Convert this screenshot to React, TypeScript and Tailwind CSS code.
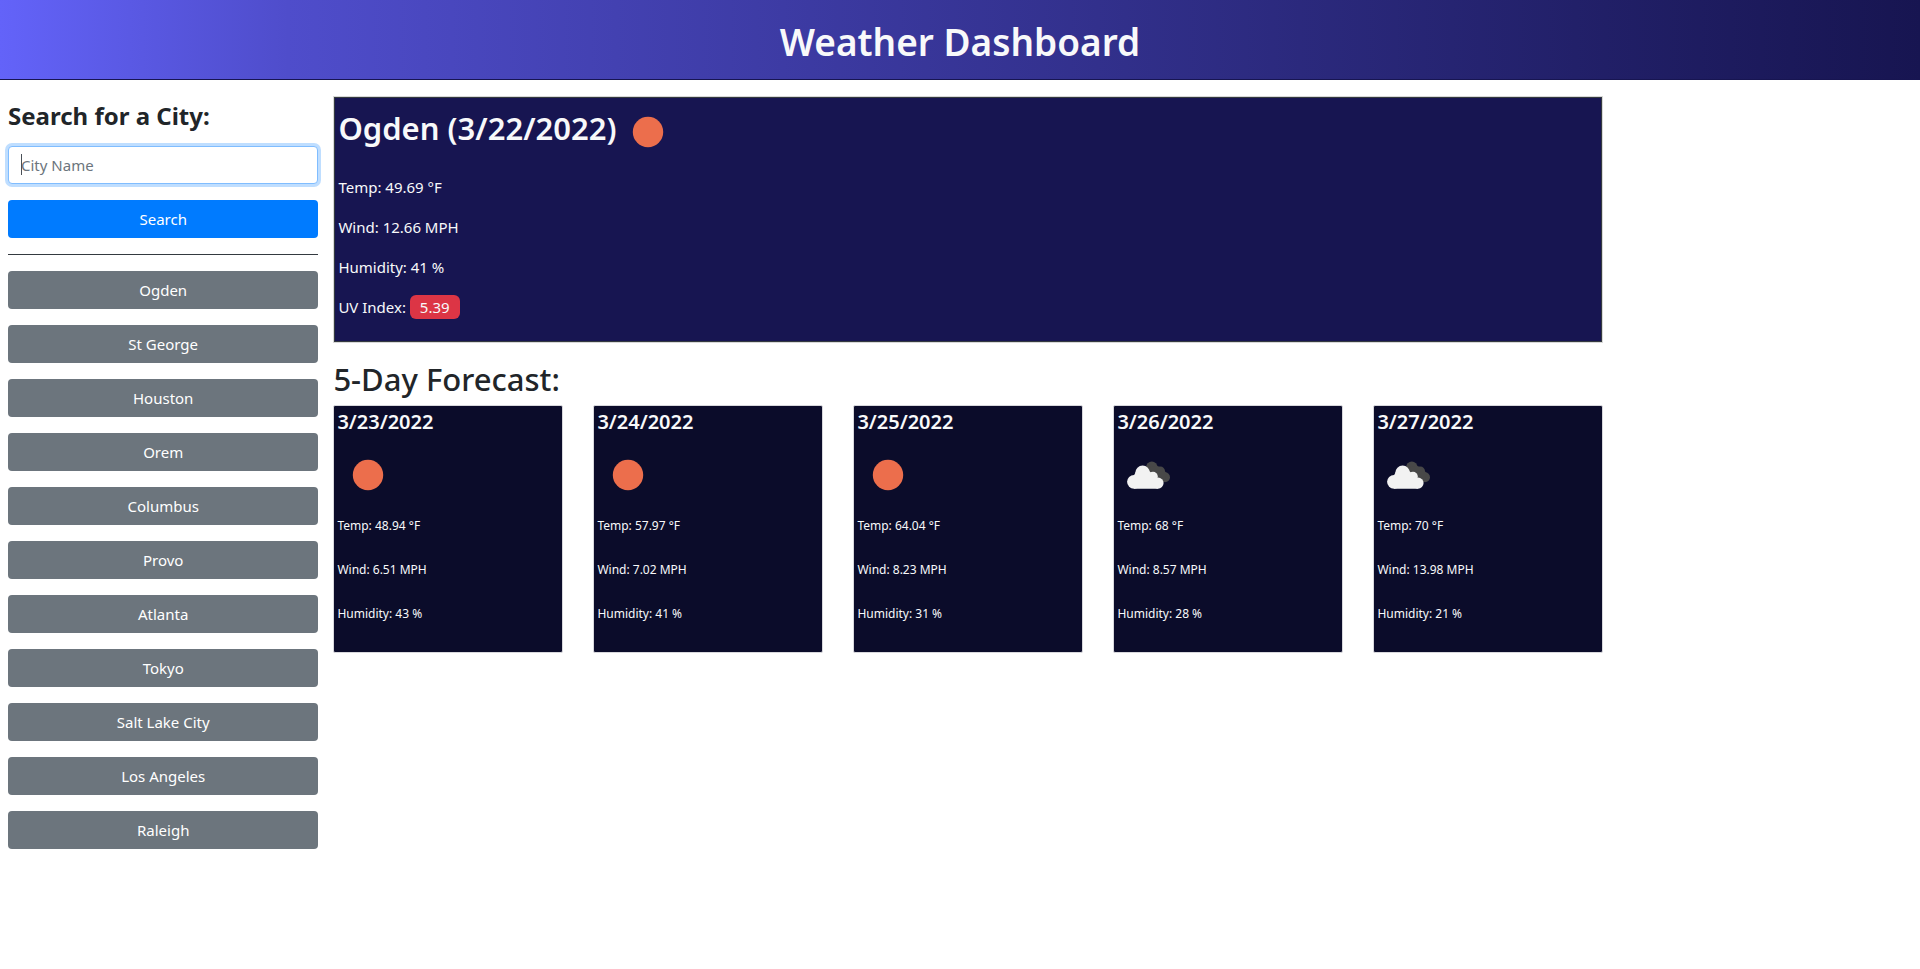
const cities = ["Ogden", "St George", "Houston", "Orem", "Columbus", "Provo", "Atlanta", "Tokyo", "Salt Lake City", "Los Angeles", "Raleigh"];

const forecast = [
  { date: "3/23/2022", icon: "sun", temp: "48.94", wind: "6.51", humidity: "43" },
  { date: "3/24/2022", icon: "sun", temp: "57.97", wind: "7.02", humidity: "41" },
  { date: "3/25/2022", icon: "sun", temp: "64.04", wind: "8.23", humidity: "31" },
  { date: "3/26/2022", icon: "clouds", temp: "68", wind: "8.57", humidity: "28" },
  { date: "3/27/2022", icon: "clouds", temp: "70", wind: "13.98", humidity: "21" },
];

function SunIcon() {
  return (
    <svg viewBox="0 0 50 50" className="size-[50px]" role="img" aria-label="Clear sky">
      <circle cx="25" cy="25" r="15.2" fill="#ec6e4c" />
    </svg>
  );
}

function CloudsIcon() {
  return (
    <svg viewBox="0 0 50 50" className="size-[50px]" role="img" aria-label="Broken clouds">
      <g fill="#484848">
        <circle cx="28.8" cy="17.4" r="5.8" />
        <circle cx="37.4" cy="21.2" r="4.6" />
        <circle cx="42" cy="27.2" r="5" />
        <path d="M24 18L33 15.5L37 17L41 20L44 24L41 32L30 28Z" />
      </g>
      <g fill="#f2f2f2">
        <circle cx="11" cy="31.8" r="6.9" />
        <circle cx="19.6" cy="22.8" r="7.3" />
        <circle cx="30" cy="26.6" r="4.8" />
        <circle cx="35" cy="33.1" r="5.6" />
        <path d="M11 25.2L12.8 22L26 21L34 27L35 38.7H11Z" />
      </g>
    </svg>
  );
}

export default function App() {
  return (
    <div className="min-h-screen bg-white font-['Noto_Sans','Open_Sans',sans-serif] text-[15px] leading-6 text-[#212529]">
      <header className="flex h-20 items-center justify-center border-b border-[#171551] bg-linear-to-r from-[#6363f9] via-[#4f4dcb] via-15% to-[#171551]">
        <h1 className="pt-1 text-[37px] leading-12 font-semibold text-[#f8f9fa]">Weather Dashboard</h1>
      </header>
      <div className="flex">
        <aside className="w-[17%] px-2 pt-4">
          <form onSubmit={(e) => e.preventDefault()}>
            <label htmlFor="city" className="mt-1 mb-3.5 block text-2xl leading-8 font-bold">Search for a City:</label>
            <div className="relative">
              <input
                id="city"
                type="text"
                placeholder="City Name"
                className="block h-[38px] w-full rounded border border-[#80bdff] bg-white px-3 shadow-[0_0_0_3px_#bfdeff] outline-none placeholder:text-[#6c757d]"
              />
              <span aria-hidden="true" className="pointer-events-none absolute top-2 left-[13px] h-[21px] w-px bg-[#495057]" />
            </div>
            <button type="submit" className="mt-4 h-[38px] w-full rounded bg-[#007bff] text-white">Search</button>
          </form>
          <hr className="my-4 border-[#343a40]" />
          <div className="flex flex-col gap-4">
            {cities.map((city) => (
              <button key={city} type="button" className="h-[38px] w-full rounded bg-[#6c757d] text-white">{city}</button>
            ))}
          </div>
        </aside>
        <main className="w-2/3 pt-4 pr-[3px] pl-[7px]">
          <section className="border border-[#d8d8d8]">
            <div className="border border-[#343a40] bg-[#171551] px-[3px] pt-1.5 pb-3.5 text-[#f8f9fa]">
              <h2 className="flex items-start gap-1.5 text-[31px] leading-12 font-semibold">
                Ogden (3/22/2022)
                <span className="pt-[3px]"><SunIcon /></span>
              </h2>
              <div className="mt-[18px] flex flex-col gap-4 pb-2">
                <p>Temp: 49.69 °F</p>
                <p>Wind: 12.66 MPH</p>
                <p>Humidity: 41 %</p>
                <p>UV Index: <span className="rounded-md bg-[#dc3545] px-2.5 py-0.5">5.39</span></p>
              </div>
            </div>
          </section>
          <h2 className="mt-[18px] mb-2 text-[31px] leading-9 font-medium">5-Day Forecast:</h2>
          <section className="grid grid-cols-5 gap-[30px]">
            {forecast.map((day) => (
              <article key={day.date} className="rounded-xs border border-[#d8d8dc] bg-[#0b0c2a] px-[3px] pt-1 pb-[26px] text-[12px] text-[#f8f9fa]">
                <h3 className="text-xl leading-6 font-semibold">{day.date}</h3>
                <div className="mt-4 mb-3.5 pl-1.5">{day.icon === "sun" ? <SunIcon /> : <CloudsIcon />}</div>
                <div className="flex flex-col gap-5">
                  <p>Temp: {day.temp} °F</p>
                  <p>Wind: {day.wind} MPH</p>
                  <p>Humidity: {day.humidity} %</p>
                </div>
              </article>
            ))}
          </section>
        </main>
      </div>
    </div>
  );
}
